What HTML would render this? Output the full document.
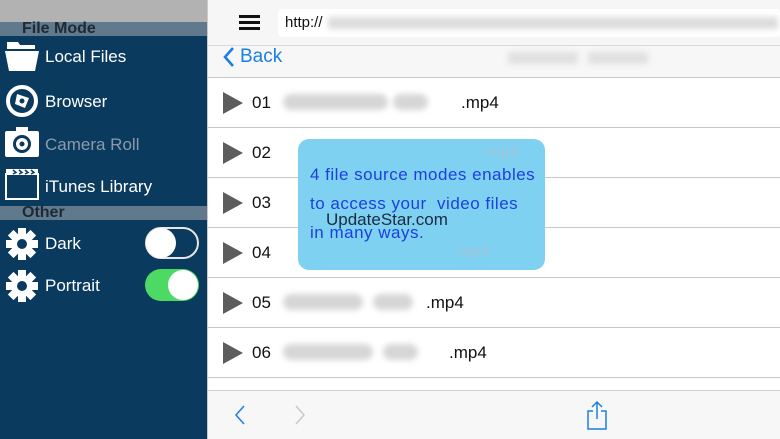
<!DOCTYPE html>
<html><head><meta charset="utf-8"><style>
*{margin:0;padding:0;box-sizing:border-box}
body{width:780px;height:439px;overflow:hidden;position:relative;font-family:"Liberation Sans",sans-serif;background:#fff}
.sb{position:absolute;left:0;top:0;width:207px;height:439px;background:#0b3a5f}
.gtop{position:absolute;left:0;top:0;width:207px;height:22px;background:#b2b2b2}
.hdr{position:absolute;left:0;width:207px;height:14px;background:#61798c;color:#1d2a35;font-size:16px;font-weight:bold;line-height:14px;padding-left:22px;overflow:visible}
.it{position:absolute;left:45px;color:#fff;font-size:17px}
.ic{position:absolute;left:5px}
.tg{position:absolute;left:145px;width:54px;height:32px;border-radius:16px}
.kn{position:absolute;top:1px;width:30px;height:30px;border-radius:50%;background:#fff}
.main{position:absolute;left:207px;top:0;width:573px;height:439px;background:#fff;border-left:1px solid #c9c9c9}
.row{position:absolute;left:0;width:573px;height:50px;border-bottom:1px solid #c8c8c8}
.tri{position:absolute;left:15px;top:14px;width:0;height:0;border-top:11px solid transparent;border-bottom:11px solid transparent;border-left:20px solid #5d5d5d}
.num{position:absolute;left:44px;top:15px;font-size:17px;color:#111}
.bl{position:absolute;top:16px;height:16px;border-radius:8px;background:#d6d6d6;filter:blur(3px)}
.ext{position:absolute;top:15px;font-size:17px;color:#111}
</style></head><body>
<div class="sb">
<div class="gtop"></div>
<div class="hdr" style="top:22px">File Mode</div>
<svg class="ic" style="top:40px" width="34" height="32" viewBox="0 0 34 32"><path d="M2 2h11l2 3h15v4H2z" fill="#fff"/><path d="M0 11h34l-4 20H4z" fill="#fff"/></svg>
<div class="it" style="top:47px">Local Files</div>
<svg class="ic" style="top:84px" width="34" height="34" viewBox="0 0 34 34"><circle cx="17" cy="17" r="14" fill="none" stroke="#fff" stroke-width="4"/><path d="M12 10l12 4-4 10-10-4z" fill="#fff"/><circle cx="17" cy="17" r="2.5" fill="#0b3a5f"/></svg>
<div class="it" style="top:92px">Browser</div>
<svg class="ic" style="top:127px" width="34" height="30" viewBox="0 0 34 30"><rect x="11" y="0" width="12" height="5" fill="#fff"/><rect x="0" y="4" width="34" height="26" rx="2" fill="#fff"/><circle cx="17" cy="17" r="9" fill="#0b3a5f"/><circle cx="17" cy="17" r="6" fill="#fff"/><circle cx="17" cy="17" r="2.5" fill="#0b3a5f"/></svg>
<div class="it" style="top:135px;color:#8a9aab">Camera Roll</div>
<svg class="ic" style="top:168px" width="34" height="32" viewBox="0 0 34 32"><rect x="1" y="6" width="32" height="25" fill="none" stroke="#fff" stroke-width="2"/><path d="M1 1h32v6H1z" fill="#fff"/><path d="M8 2l3 2.5L8 6M14 2l3 2.5L14 6M20 2l3 2.5L20 6M26 2l3 2.5L26 6" stroke="#0b3a5f" stroke-width="1.5" fill="none"/></svg>
<div class="it" style="top:177px">iTunes Library</div>
<div class="hdr" style="top:206px">Other</div>
<svg class="ic" style="top:227px" width="34" height="34" viewBox="-17 -17 34 34"><g fill="#fff"><circle r="11"/><rect x="-4" y="-16" width="8" height="32"/><rect x="-4" y="-16" width="8" height="32" transform="rotate(45)"/><rect x="-4" y="-16" width="8" height="32" transform="rotate(90)"/><rect x="-4" y="-16" width="8" height="32" transform="rotate(135)"/></g><circle r="5" fill="#0b3a5f"/></svg>
<div class="it" style="top:234px">Dark</div>
<div class="tg" style="top:227px;border:2px solid #e6e6e6;background:transparent"><div class="kn" style="left:-1px;top:-1px"></div></div>
<svg class="ic" style="top:269px" width="34" height="34" viewBox="-17 -17 34 34"><g fill="#fff"><circle r="11"/><rect x="-4" y="-16" width="8" height="32"/><rect x="-4" y="-16" width="8" height="32" transform="rotate(45)"/><rect x="-4" y="-16" width="8" height="32" transform="rotate(90)"/><rect x="-4" y="-16" width="8" height="32" transform="rotate(135)"/></g><circle r="5" fill="#0b3a5f"/></svg>
<div class="it" style="top:276px">Portrait</div>
<div class="tg" style="top:269px;background:#4cd964"><div class="kn" style="left:23px"></div></div>
</div>
<div class="main">
<div style="position:absolute;left:0;top:0;width:573px;height:46px;background:#f6f6f6;border-bottom:1px solid #d8d8d8"></div>
<div style="position:absolute;left:31px;top:15px;width:21px;height:3px;background:#111;box-shadow:0 6px 0 #111,0 12px 0 #111"></div>
<div style="position:absolute;left:70px;top:9px;width:503px;height:28px;background:#fff;border-radius:5px"></div>
<div style="position:absolute;left:77px;top:14px;font-size:15px;color:#111">http://</div>
<div style="position:absolute;left:120px;top:17px;width:450px;height:12px;background:#dcdcdc;filter:blur(3px)"></div>
<div style="position:absolute;left:0;top:46px;width:573px;height:32px;background:#f7f7f7;border-bottom:1px solid #c8c8c8"></div>
<svg style="position:absolute;left:14px;top:46px" width="14" height="22" viewBox="0 0 14 22"><path d="M11 2L3 11l8 9" stroke="#1a7ee8" stroke-width="2.6" fill="none"/></svg>
<div style="position:absolute;left:32px;top:46px;font-size:19px;color:#1a7ee8">Back</div>
<div style="position:absolute;left:300px;top:52px;width:70px;height:12px;background:#e0e0e0;filter:blur(3px)"></div>
<div style="position:absolute;left:380px;top:52px;width:60px;height:12px;background:#e0e0e0;filter:blur(3px)"></div>
<div class="row" style="top:78px"><div class="tri"></div><div class="num">01</div><div class="bl" style="left:75px;width:105px"></div><div class="bl" style="left:185px;width:35px"></div><div class="ext" style="left:253px">.mp4</div></div>
<div class="row" style="top:128px"><div class="tri"></div><div class="num">02</div></div>
<div class="row" style="top:178px"><div class="tri"></div><div class="num">03</div></div>
<div class="row" style="top:228px"><div class="tri"></div><div class="num">04</div></div>
<div class="row" style="top:278px"><div class="tri"></div><div class="num">05</div><div class="bl" style="left:75px;width:80px"></div><div class="bl" style="left:165px;width:40px"></div><div class="ext" style="left:218px">.mp4</div></div>
<div class="row" style="top:328px"><div class="tri"></div><div class="num">06</div><div class="bl" style="left:75px;width:90px"></div><div class="bl" style="left:175px;width:35px"></div><div class="ext" style="left:241px">.mp4</div></div>
<div style="position:absolute;left:0;top:390px;width:573px;height:49px;background:#f7f7f7;border-top:1px solid #d0d0d0"></div>
<svg style="position:absolute;left:26px;top:404px" width="12" height="22" viewBox="0 0 12 22"><path d="M10 2L2 11l8 9" stroke="#1a7ee8" stroke-width="1.5" fill="none"/></svg>
<svg style="position:absolute;left:86px;top:404px" width="12" height="22" viewBox="0 0 12 22"><path d="M2 2l8 9-8 9" stroke="#c8c8c8" stroke-width="1.5" fill="none"/></svg>
<svg style="position:absolute;left:378px;top:400px" width="22" height="30" viewBox="0 0 22 30"><path d="M7 11H2v18h18V11h-5M11 19V2M6 7l5-5 5 5" stroke="#1a7ee8" stroke-width="1.5" fill="none"/></svg>
</div>
<div style="position:absolute;left:298px;top:139px;width:247px;height:131px;background:#7fd1f1;border-radius:11px"></div>
<div style="position:absolute;left:483px;top:144px;font-size:16px;color:#a0c4d8">.mp4</div>
<div style="position:absolute;left:454px;top:243px;font-size:16px;color:#a0c4d8">.mp4</div>
<div style="position:absolute;left:310px;top:160px;font-size:17px;line-height:29px;color:#1c3fe0;letter-spacing:0.5px">4 file source modes enables<br>to access your&nbsp; video files<br>in many ways.</div>
<div style="position:absolute;left:326px;top:210px;font-size:17px;color:#1a2a40">UpdateStar.com</div>
</body></html>
